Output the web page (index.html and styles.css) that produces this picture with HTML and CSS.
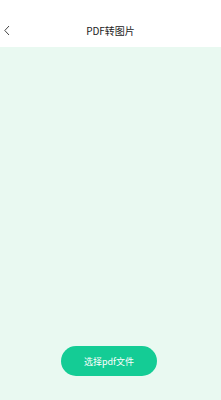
FILE: index.html
```html
<!DOCTYPE html>
<html lang="zh">
<head>
  <meta charset="UTF-8">
  <title>PDF转图片</title>
  <link rel="stylesheet" href="styles.css">
</head>
<body>
  <header class="top-bar">
    <span class="back">
      <svg width="8" height="11" viewBox="0 0 8 11"><path d="M6 1 L1.8 5.5 L6 10" fill="none" stroke="#444" stroke-width="1"/></svg>
    </span>
    <h1 class="title">PDF转图片</h1>
  </header>

  <main class="content">
    <button class="pick-btn">选择pdf文件</button>
  </main>
</body>
</html>
```

FILE: styles.css
```css
html, body {
  height: 100%;
}

body {
  margin: 0;
  font-family: "Noto Sans CJK SC", "Noto Sans", sans-serif;
  display: flex;
  flex-direction: column;
  background: #e9f9f1;
}

.top-bar {
  height: 47px;
  background: #fff;
  display: flex;
  align-items: center;
  justify-content: center;
  position: relative;
  padding-top: 13px;
  box-sizing: border-box;
}

.back {
  position: absolute;
  left: 3px;
  top: 25px;
  display: flex;
}

.title {
  margin: 0;
  font-size: 10px;
  font-weight: 400;
  color: #222;
}

.content {
  flex: 1;
  display: flex;
  flex-direction: column;
  justify-content: flex-end;
  align-items: center;
  padding-bottom: 24px;
}

.pick-btn {
  width: 96px;
  height: 30px;
  margin-right: 3px;
  border: none;
  border-radius: 15px;
  background: #14cc95;
  color: #fff;
  font-family: inherit;
  font-size: 9px;
  padding: 0;
}
```
